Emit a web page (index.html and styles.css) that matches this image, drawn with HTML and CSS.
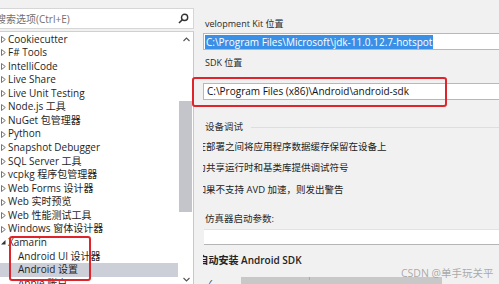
FILE: index.html
```html
<!DOCTYPE html>
<html lang="zh-CN">
<head>
<meta charset="utf-8">
<title>选项 - Android 设置</title>
<link rel="stylesheet" href="styles.css">
</head>
<body>
<div class="app">
  <aside class="left">
    <div class="search">
      <span class="placeholder">搜索选项(Ctrl+E)</span>
      <svg class="search-icon" width="11" height="11" viewBox="0 0 11 11"><circle cx="6.6" cy="4.4" r="3.1" fill="none" stroke="#333" stroke-width="1.4"/><line x1="4.3" y1="6.7" x2="1" y2="10" stroke="#333" stroke-width="1.6"/></svg>
    </div>
    <div class="tree">
      <ul class="items">
        <li class="item"><svg class="tri" width="5" height="7" viewBox="0 0 5 7"><polygon points="0.5,0.5 4.3,3.5 0.5,6.5" fill="none" stroke="#666" stroke-width="0.9"/></svg>Cookiecutter</li>
        <li class="item"><svg class="tri" width="5" height="7" viewBox="0 0 5 7"><polygon points="0.5,0.5 4.3,3.5 0.5,6.5" fill="none" stroke="#666" stroke-width="0.9"/></svg>F# Tools</li>
        <li class="item"><svg class="tri" width="5" height="7" viewBox="0 0 5 7"><polygon points="0.5,0.5 4.3,3.5 0.5,6.5" fill="none" stroke="#666" stroke-width="0.9"/></svg>IntelliCode</li>
        <li class="item"><svg class="tri" width="5" height="7" viewBox="0 0 5 7"><polygon points="0.5,0.5 4.3,3.5 0.5,6.5" fill="none" stroke="#666" stroke-width="0.9"/></svg>Live Share</li>
        <li class="item"><svg class="tri" width="5" height="7" viewBox="0 0 5 7"><polygon points="0.5,0.5 4.3,3.5 0.5,6.5" fill="none" stroke="#666" stroke-width="0.9"/></svg>Live Unit Testing</li>
        <li class="item"><svg class="tri" width="5" height="7" viewBox="0 0 5 7"><polygon points="0.5,0.5 4.3,3.5 0.5,6.5" fill="none" stroke="#666" stroke-width="0.9"/></svg>Node.js 工具</li>
        <li class="item"><svg class="tri" width="5" height="7" viewBox="0 0 5 7"><polygon points="0.5,0.5 4.3,3.5 0.5,6.5" fill="none" stroke="#666" stroke-width="0.9"/></svg>NuGet 包管理器</li>
        <li class="item"><svg class="tri" width="5" height="7" viewBox="0 0 5 7"><polygon points="0.5,0.5 4.3,3.5 0.5,6.5" fill="none" stroke="#666" stroke-width="0.9"/></svg>Python</li>
        <li class="item"><svg class="tri" width="5" height="7" viewBox="0 0 5 7"><polygon points="0.5,0.5 4.3,3.5 0.5,6.5" fill="none" stroke="#666" stroke-width="0.9"/></svg>Snapshot Debugger</li>
        <li class="item"><svg class="tri" width="5" height="7" viewBox="0 0 5 7"><polygon points="0.5,0.5 4.3,3.5 0.5,6.5" fill="none" stroke="#666" stroke-width="0.9"/></svg>SQL Server 工具</li>
        <li class="item"><svg class="tri" width="5" height="7" viewBox="0 0 5 7"><polygon points="0.5,0.5 4.3,3.5 0.5,6.5" fill="none" stroke="#666" stroke-width="0.9"/></svg>vcpkg 程序包管理器</li>
        <li class="item"><svg class="tri" width="5" height="7" viewBox="0 0 5 7"><polygon points="0.5,0.5 4.3,3.5 0.5,6.5" fill="none" stroke="#666" stroke-width="0.9"/></svg>Web Forms 设计器</li>
        <li class="item"><svg class="tri" width="5" height="7" viewBox="0 0 5 7"><polygon points="0.5,0.5 4.3,3.5 0.5,6.5" fill="none" stroke="#666" stroke-width="0.9"/></svg>Web 实时预览</li>
        <li class="item"><svg class="tri" width="5" height="7" viewBox="0 0 5 7"><polygon points="0.5,0.5 4.3,3.5 0.5,6.5" fill="none" stroke="#666" stroke-width="0.9"/></svg>Web 性能测试工具</li>
        <li class="item"><svg class="tri" width="5" height="7" viewBox="0 0 5 7"><polygon points="0.5,0.5 4.3,3.5 0.5,6.5" fill="none" stroke="#666" stroke-width="0.9"/></svg>Windows 窗体设计器</li>
        <li class="item"><svg class="tri" width="5" height="7" viewBox="0 0 5 7"><polygon points="4.5,1 4.5,5.5 0,5.5" fill="#333"/></svg>Xamarin</li>
        <li class="item child">Android UI 设计器</li>
        <li class="item child selected">Android 设置</li>
        <li class="item child">Apple 账户</li>
      </ul>
      <div class="vscroll">
        <svg class="chev" width="7" height="5" viewBox="0 0 7 5"><polyline points="0.5,4 3.5,1 6.5,4" fill="none" stroke="#555" stroke-width="1.1"/></svg>
        <div class="thumb"></div>
        <svg class="chev down" width="7" height="5" viewBox="0 0 7 5"><polyline points="0.5,1 3.5,4 6.5,1" fill="none" stroke="#555" stroke-width="1.1"/></svg>
      </div>
    </div>
  </aside>

  <main class="right">
    <div class="pane">
      <div class="label l1">velopment Kit 位置</div>
      <div class="field f1"><span class="sel">C:\Program Files\Microsoft\jdk-11.0.12.7-hotspot</span></div>
      <div class="label l2">SDK 位置</div>
      <div class="field f2">C:\Program Files (x86)\Android\android-sdk</div>
      <div class="group"><span class="group-title">设备调试</span><span class="rule"></span></div>
      <div class="opt">在部署之间将应用程序数据缓存保留在设备上</div>
      <div class="opt">为共享运行时和基类库提供调试符号</div>
      <div class="opt">如果不支持 AVD 加速，则发出警告</div>
      <div class="label l3">仿真器启动参数:</div>
      <div class="field f3"></div>
      <div class="heading">自动安装 Android SDK</div>
      <div class="list-head"><span class="check">✓</span><span class="tick"></span><span class="bar"></span></div>
    </div>
  </main>

  <div class="mark mark-left"></div>
  <div class="mark mark-right"></div>
  <div class="watermark">CSDN @单手玩关平</div>
</div>
</body>
</html>
```

FILE: styles.css
```css
* { box-sizing: border-box; }
html, body { margin: 0; padding: 0; }
body {
  width: 499px;
  height: 284px;
  overflow: hidden;
  background: #f1f1f1;
  font-family: "Open Sans", "Noto Sans CJK SC", sans-serif;
  color: #1e1e1e;
}
.app {
  position: relative;
  display: flex;
  width: 499px;
  height: 284px;
}

/* left panel */
.left {
  width: 194px;
  flex: none;
  padding-top: 8px;
  display: flex;
  flex-direction: column;
}
.search {
  height: 21px;
  background: #fff;
  border: 1px solid #d6d6d6;
  border-left: none;
  display: flex;
  align-items: center;
  justify-content: space-between;
  padding-right: 4px;
  overflow: hidden;
}
.placeholder {
  margin-left: -4px;
  font-size: 10px;
  color: #707070;
  white-space: nowrap;
}
.search-icon { flex: none; }
.tree {
  margin-top: 2px;
  flex: 1;
  background: #fff;
  border-top: 1px solid #d0d0d0;
  border-right: 1px solid #c8c8c8;
  display: flex;
  overflow: hidden;
}
.items {
  list-style: none;
  margin: 0;
  padding: 0.5px 0 0;
  width: 178px;
  flex: none;
}
.item {
  height: 13.57px;
  line-height: 13.57px;
  font-size: 10px;
  white-space: nowrap;
  display: flex;
  align-items: center;
  padding-left: 0.5px;
}
.tri { flex: none; margin-right: 2.5px; }
.child { padding-left: 18px; }
.selected { background: #cdcfd8; }

.vscroll {
  width: 15px;
  flex: none;
  display: flex;
  flex-direction: column;
  align-items: center;
  padding-top: 5px;
}
.chev { flex: none; margin-left: 1px; }
.thumb {
  width: 13px;
  height: 111px;
  margin-top: 59px;
  background: #c4c5ca;
}
.chev.down { margin-top: 65px; }

/* right panel */
.right {
  flex: 1;
  padding-left: 9px;
  overflow: hidden;
}
.pane {
  height: 100%;
  overflow: hidden;
  padding-top: 18px;
  display: flex;
  flex-direction: column;
}
.label {
  font-size: 9px;
  line-height: 12px;
  height: 12px;
  padding-left: 2px;
  color: #2a2a2a;
  white-space: nowrap;
}
.l1 { margin-bottom: 3px; }
.l2 { margin-bottom: 14px; }
.l3 { margin-top: 13.5px; margin-bottom: 3.5px; font-size: 9.5px; }
.field {
  width: 330px;
  flex: none;
  background: #fff;
  white-space: nowrap;
  font-size: 10px;
}
.f1 {
  height: 17px;
  margin-bottom: 7px;
  border-top: 1px solid #a5bbd6;
  border-bottom: 1px solid #a5bbd6;
  border-left: 1px solid #a5bbd6;
  padding: 1px 0 0 1px;
}
.sel {
  display: inline-block;
  background: #3990e6;
  color: #fff;
  height: 14px;
  line-height: 14px;
  padding: 0 1px 0 1px;
}
.f2 {
  height: 17px;
  margin-bottom: 21px;
  border-top: 1px solid #b8b8b8;
  border-bottom: 1px solid #b8b8b8;
  border-left: 1px solid #b8b8b8;
  line-height: 15px;
  padding-left: 3px;
  color: #111;
}
.group {
  display: flex;
  align-items: center;
  height: 12px;
  margin-bottom: 3px;
  padding-left: 2px;
}
.group-title {
  font-size: 9.5px;
  line-height: 12px;
  color: #333;
  white-space: nowrap;
}
.rule {
  flex: 1;
  height: 1px;
  margin-left: 8px;
  background: #dedede;
}
.opt {
  height: 21.3px;
  line-height: 21.3px;
  font-size: 9.5px;
  margin-left: -6.5px;
  white-space: nowrap;
  color: #222;
}
.f3 {
  height: 16px;
  border-top: 1px solid #e2e2e2;
  border-bottom: 1px solid #b5b5b5;
  margin-left: 1px;
}
.heading {
  margin-top: 9px;
  height: 12px;
  line-height: 12px;
  font-size: 10px;
  font-weight: 600;
  margin-left: -4.5px;
  white-space: nowrap;
  color: #222;
}
.list-head {
  margin-top: 11px;
  height: 9px;
  display: flex;
  align-items: flex-start;
}
.check {
  font-size: 9px;
  line-height: 9px;
  margin-left: 3px;
  padding-top: 2px;
  color: #333;
}
.tick {
  width: 1px;
  height: 3px;
  margin-left: 97px;
  background: #aaa;
}
.bar {
  width: 201px;
  height: 9px;
  margin-left: -69px;
  background: #c8c8c8;
  position: relative;
  z-index: -1;
}

/* annotation overlays */
.mark {
  position: absolute;
  border: 2px solid #e0242b;
  border-radius: 3px;
  pointer-events: none;
}
.mark-left { left: 9px; top: 236px; width: 82px; height: 45px; }
.mark-right { left: 192px; top: 77px; width: 255px; height: 30px; }
.watermark {
  position: absolute;
  left: 401px;
  top: 266px;
  font-size: 10.5px;
  line-height: 14px;
  color: rgba(150, 150, 150, 0.8);
  white-space: nowrap;
}
```
